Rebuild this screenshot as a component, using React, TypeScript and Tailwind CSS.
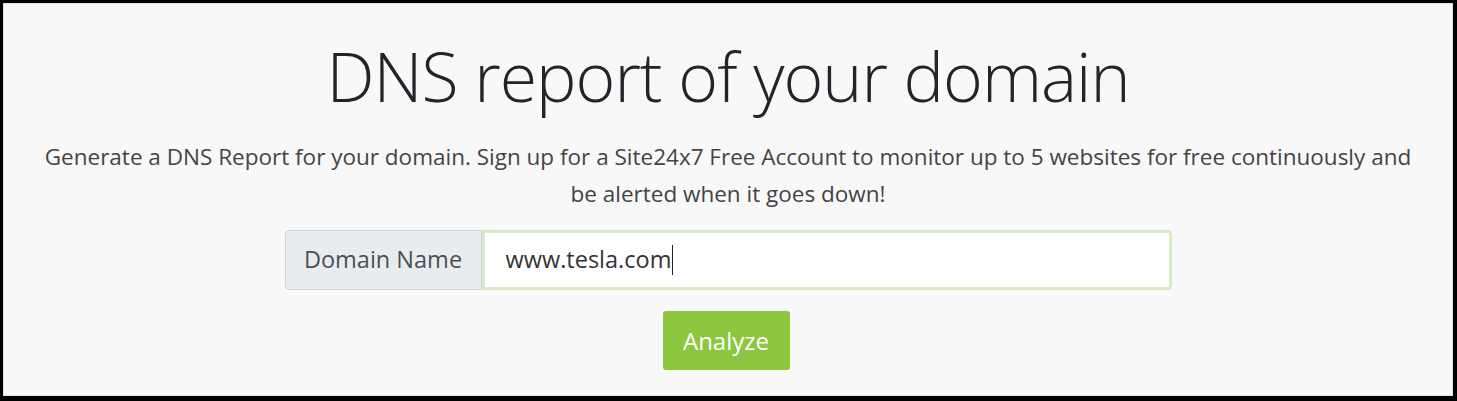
import React from "react";

const App: React.FC = () => {
  return (
    <div className="w-[1457px] h-[401px] bg-black pt-[3px] pl-[3px] pr-[4px] pb-[5px]">
      <div
        className="h-full w-full bg-[#f8f8f8] border border-[#e2e2e2] flex flex-col items-center"
        style={{ fontFamily: '"Open Sans", "Noto Sans", sans-serif' }}
      >
        {/* Heading */}
        <h1 className="mt-[24px] text-[68px] leading-[96px] font-light text-[#212529] tracking-[-1px]">
          DNS report of your domain
        </h1>

        {/* Description */}
        <p className="mt-[14px] text-[22.5px] leading-[37px] text-[#444] text-center px-[36px]">
          Generate a DNS Report for your domain. Sign up for a Site24x7 Free Account to monitor up to 5 websites for free continuously and be alerted when it goes down!
        </p>

        {/* Domain input */}
        <div className="mt-[18px] flex w-[887px] h-[60px]">
          <div className="w-[197px] flex items-center justify-center bg-[#e9ecef] border border-[#ced4da] rounded-l-[4px] text-[23.5px] text-[#495057]">
            Domain Name
          </div>
          <div className="flex-1 flex items-center bg-white border-[3px] border-[#d9eac6] rounded-r-[4px] pl-[21px] text-[23.5px] text-[#333]">
            www.tesla.com
            <span className="inline-block w-px h-[30px] bg-[#222] ml-[1px]" />
          </div>
        </div>

        {/* Submit */}
        <button className="mt-[21px] mr-[4px] w-[127px] h-[59px] bg-[#8dc63f] rounded-[3px] text-white text-[24px]">
          Analyze
        </button>
      </div>
    </div>
  );
};

export default App;
